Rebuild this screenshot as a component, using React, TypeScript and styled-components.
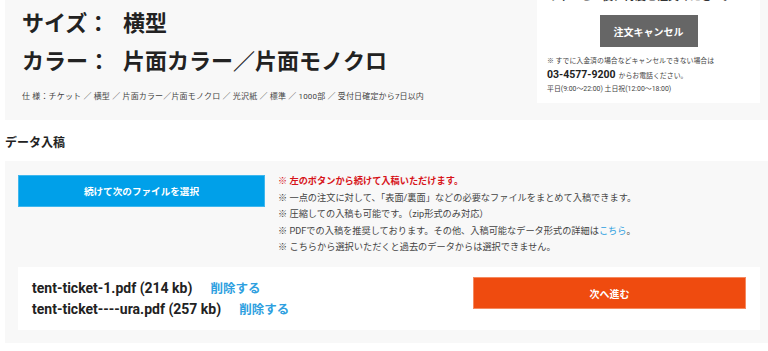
import React from 'react'
import styled, { createGlobalStyle } from 'styled-components';

const GlobalStyle = createGlobalStyle`
    body {
        margin: 0;
        background: #ffffff;
        font-family: Roboto, "Noto Sans CJK JP", sans-serif;
        color: #222222;
        overflow: hidden;
    }
`;

const Page = styled.div`
    margin-top: -10px;
    padding-left: 5px;
`;

const Summary = styled.div`
    display: flex;
    justify-content: space-between;
    align-items: flex-start;
    background: #f8f8f8;
    padding: 0 8px 15px 0;
`;

const SpecColumn = styled.div`
    padding: 15px 0 0 17px;
`;

const SpecTitle = styled.div`
    display: flex;
    font-size: 22px;
    line-height: 38px;
    font-weight: 700;
    color: #222;
`;

const SpecLabel = styled.span`
    width: 101px;
`;

const SpecLine = styled.div`
    margin-top: 8px;
    font-size: 8px;
    line-height: 16px;
    color: #444;
    letter-spacing: 0.02em;
`;

const CancelCard = styled.div`
    width: 213px;
    background: #ffffff;
    padding: 0 0 9px 10px;
    display: flex;
    flex-direction: column;
`;

const CancelLead = styled.div`
    font-size: 11px;
    line-height: 14px;
    font-weight: 700;
    color: #333;
`;

const CancelButton = styled.button`
    align-self: center;
    margin: 11px 0 0 -10px;
    width: 98px;
    height: 32px;
    border: none;
    background: #666666;
    color: #ffffff;
    font-family: inherit;
    font-size: 10px;
    font-weight: 700;
    cursor: pointer;
`;

const CancelNote = styled.div<{ $line: number; $top?: number }>`
    margin-top: ${p => p.$top || 0}px;
    font-size: 6.9px;
    line-height: ${p => p.$line}px;
    color: #444;
`;

const Phone = styled.strong`
    font-size: 10.5px;
    color: #222;
    margin-right: 3px;
`;

const SectionTitle = styled.h2`
    margin: 13px 0 8px;
    font-size: 12px;
    line-height: 20px;
    font-weight: 700;
    color: #222;
`;

const UploadBox = styled.div`
    background: #f8f8f8;
    padding: 14px 8px 13px 13px;
`;

const UploadRow = styled.div`
    display: flex;
    align-items: flex-start;
    gap: 13px;
`;

const ActionButton = styled.button<{ $color: string; $edge: string; $width: number; $size: number }>`
    flex: none;
    width: ${p => p.$width}px;
    height: 32px;
    border: 1px solid ${p => p.$edge};
    background: ${p => p.$color};
    color: #ffffff;
    font-family: inherit;
    font-size: ${p => p.$size}px;
    font-weight: 700;
    cursor: pointer;
`;

const Notes = styled.ul`
    list-style: none;
    margin: -2px 0 0;
    padding: 0;
    height: 83px;
`;

const Note = styled.li<{ $alert?: boolean }>`
    font-size: 9.2px;
    line-height: 16.6px;
    color: ${p => (p.$alert ? '#d7141a' : '#444')};
    font-weight: ${p => (p.$alert ? 700 : 400)};
`;

const Link = styled.a`
    color: #2e9fe0;
    text-decoration: none;
`;

const FileCard = styled.div`
    margin-top: 11px;
    height: 63px;
    box-sizing: border-box;
    background: #ffffff;
    display: flex;
    justify-content: space-between;
    align-items: flex-start;
    padding: 10px 14px 11px 14px;
`;

const FileList = styled.div`
    display: flex;
    flex-direction: column;
`;

const FileRow = styled.div`
    display: flex;
    align-items: center;
    gap: 18px;
    height: 21px;
    font-size: 14px;
    font-weight: 700;
    color: #222;
`;

const DeleteLink = styled.a`
    color: #2e9fe0;
    font-family: "Noto Sans CJK JP", sans-serif;
    font-size: 12.5px;
    cursor: pointer;
`;

function App() {

    const files = [
        { name: 'tent-ticket-1.pdf', size: '214 kb' },
        { name: 'tent-ticket----ura.pdf', size: '257 kb' },
    ];

    return (
        <Page>
            <GlobalStyle />
            <Summary>
                <SpecColumn>
                    <SpecTitle><SpecLabel>サイズ：</SpecLabel>横型</SpecTitle>
                    <SpecTitle><SpecLabel>カラー：</SpecLabel>片面カラー／片面モノクロ</SpecTitle>
                    <SpecLine>
                        仕 様：チケット ／ 横型 ／ 片面カラー／片面モノクロ ／ 光沢紙 ／ 標準 ／ 1000部 ／ 受付日確定から7日以内
                    </SpecLine>
                </SpecColumn>
                <CancelCard>
                    <CancelLead>キャンセル後、再度ご注文ください。</CancelLead>
                    <CancelButton>注文キャンセル</CancelButton>
                    <CancelNote $line={12} $top={8}>
                        ※ すでに入金済の場合などキャンセルできない場合は
                    </CancelNote>
                    <CancelNote $line={16}>
                        <Phone>03-4577-9200</Phone>からお電話ください。
                    </CancelNote>
                    <CancelNote $line={10}>
                        平日(9:00〜22:00) 土日祝(12:00〜18:00)
                    </CancelNote>
                </CancelCard>
            </Summary>

            <SectionTitle>データ入稿</SectionTitle>
            <UploadBox>
                <UploadRow>
                    <ActionButton $color="#00a0e9" $edge="#3fb7ee" $width={247} $size={9.6}>
                        続けて次のファイルを選択
                    </ActionButton>
                    <Notes>
                        <Note $alert>※ 左のボタンから続けて入稿いただけます。</Note>
                        <Note>※ 一点の注文に対して、「表面/裏面」などの必要なファイルをまとめて入稿できます。</Note>
                        <Note>※ 圧縮しての入稿も可能です。（zip形式のみ対応）</Note>
                        <Note>※ PDFでの入稿を推奨しております。その他、入稿可能なデータ形式の詳細は<Link>こちら</Link>。</Note>
                        <Note>※ こちらから選択いただくと過去のデータからは選択できません。</Note>
                    </Notes>
                </UploadRow>
                <FileCard>
                    <FileList>
                        {files.map((file, index) => (
                            <FileRow key={index}>
                                <span>{file.name} ({file.size})</span>
                                <DeleteLink>削除する</DeleteLink>
                            </FileRow>
                        ))}
                    </FileList>
                    <ActionButton $color="#ef4b0f" $edge="#f58a60" $width={273} $size={10}>
                        次へ進む
                    </ActionButton>
                </FileCard>
            </UploadBox>
        </Page>
    )
}

export default App;
